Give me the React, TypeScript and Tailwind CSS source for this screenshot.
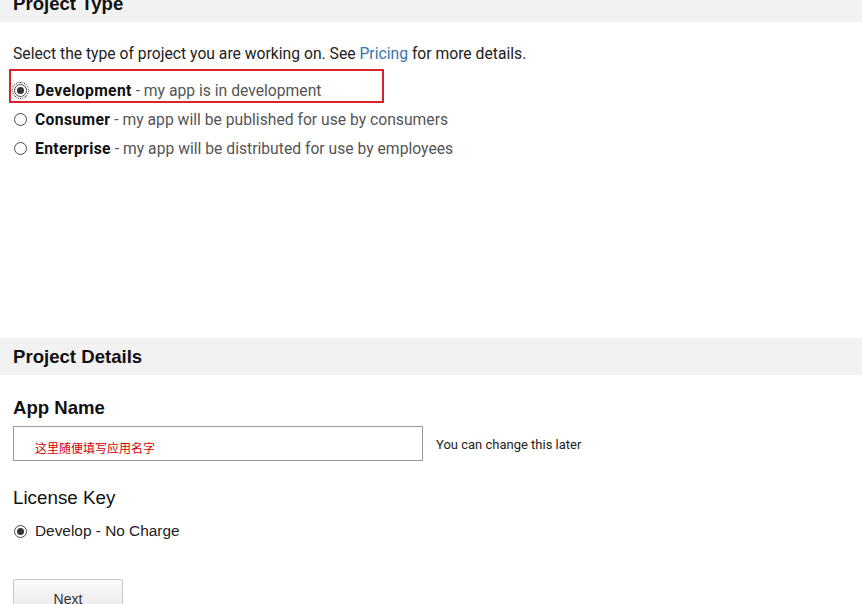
import React from 'react';

const Radio: React.FC<{ checked?: boolean; focused?: boolean }> = ({ checked, focused }) => (
  <span
    className={`relative inline-flex items-center justify-center w-[13px] h-[13px] shrink-0 rounded-full border border-[#4a4a4a] bg-white ${
      focused ? 'outline-1 outline-dotted outline-[#222] outline-offset-1' : ''
    }`}
  >
    {checked && <span className="w-[7px] h-[7px] rounded-full bg-[#333]" />}
  </span>
);

const projectTypes = [
  { name: 'Development', desc: 'my app is in development', checked: true },
  { name: 'Consumer', desc: 'my app will be published for use by consumers', checked: false },
  { name: 'Enterprise', desc: 'my app will be distributed for use by employees', checked: false },
];

const App: React.FC = () => {
  return (
    <div className="w-[862px] h-[604px] overflow-hidden bg-white text-[#222] font-['Roboto',sans-serif]">
      {/* Project Type */}
      <div className="-mt-[15px] h-[37px] bg-[#f2f2f2] px-[13px] flex items-center">
        <h2 className="text-[18.6px] font-bold text-[#111] font-['Liberation_Sans',sans-serif]">Project Type</h2>
      </div>

      <div className="px-[13px]">
        <p className="mt-[22px] text-[15.7px] leading-[20px]">
          Select the type of project you are working on. See{' '}
          <span className="text-[#3a74b2]">Pricing</span> for more details.
        </p>

        <div className="relative mt-[12px]">
          <div className="absolute -left-[4px] -top-[7px] w-[375px] h-[34px] border-2 border-[#d9232a]" />
          {projectTypes.map((t) => (
            <div key={t.name} className="h-[29px] flex items-center pl-[1px]">
              <Radio checked={t.checked} focused={t.checked} />
              <span className="ml-[8px] text-[15.7px]">
                <span className="font-bold text-[#111] tracking-[0.35px]">{t.name}</span>
                <span className="text-[#555]"> - {t.desc}</span>
              </span>
            </div>
          ))}
        </div>
      </div>

      {/* Project Details */}
      <div className="mt-[175px] h-[37px] bg-[#f2f2f2] px-[13px] flex items-center">
        <h2 className="text-[18.6px] font-bold text-[#111] font-['Liberation_Sans',sans-serif] pt-[1px]">
          Project Details
        </h2>
      </div>

      <div className="px-[13px]">
        <h3 className="mt-[22px] text-[18.6px] leading-[22px] font-bold text-[#111] font-['Liberation_Sans',sans-serif]">
          App Name
        </h3>
        <div className="mt-[7px] flex items-center">
          <div className="w-[410px] h-[35px] border border-[#999] bg-white pl-[21px] pt-[9px]">
            <span className="text-[12px] leading-[16px] text-[#d40000] font-['Noto_Sans_CJK_SC',sans-serif]">
              这里随便填写应用名字
            </span>
          </div>
          <span className="ml-[13px] text-[13px] text-[#222] pt-[2px]">You can change this later</span>
        </div>

        <h3 className="mt-[26px] text-[18.8px] leading-[22px] text-[#111] font-['Liberation_Sans',sans-serif]">
          License Key
        </h3>
        <div className="mt-[11px] h-[22px] flex items-center pl-[1px]">
          <Radio checked />
          <span className="ml-[8px] text-[15.4px] text-[#222] font-['Liberation_Sans',sans-serif]">
            Develop - No Charge
          </span>
        </div>

        <button className="mt-[37px] w-[110px] h-[32px] rounded-[3px] border border-[#c8c8c8] bg-gradient-to-b from-[#fafafa] to-[#e9e9e9] text-[14px] text-[#333] font-['Liberation_Sans',sans-serif] pt-[8px]">
          Next
        </button>
      </div>
    </div>
  );
};

export default App;
